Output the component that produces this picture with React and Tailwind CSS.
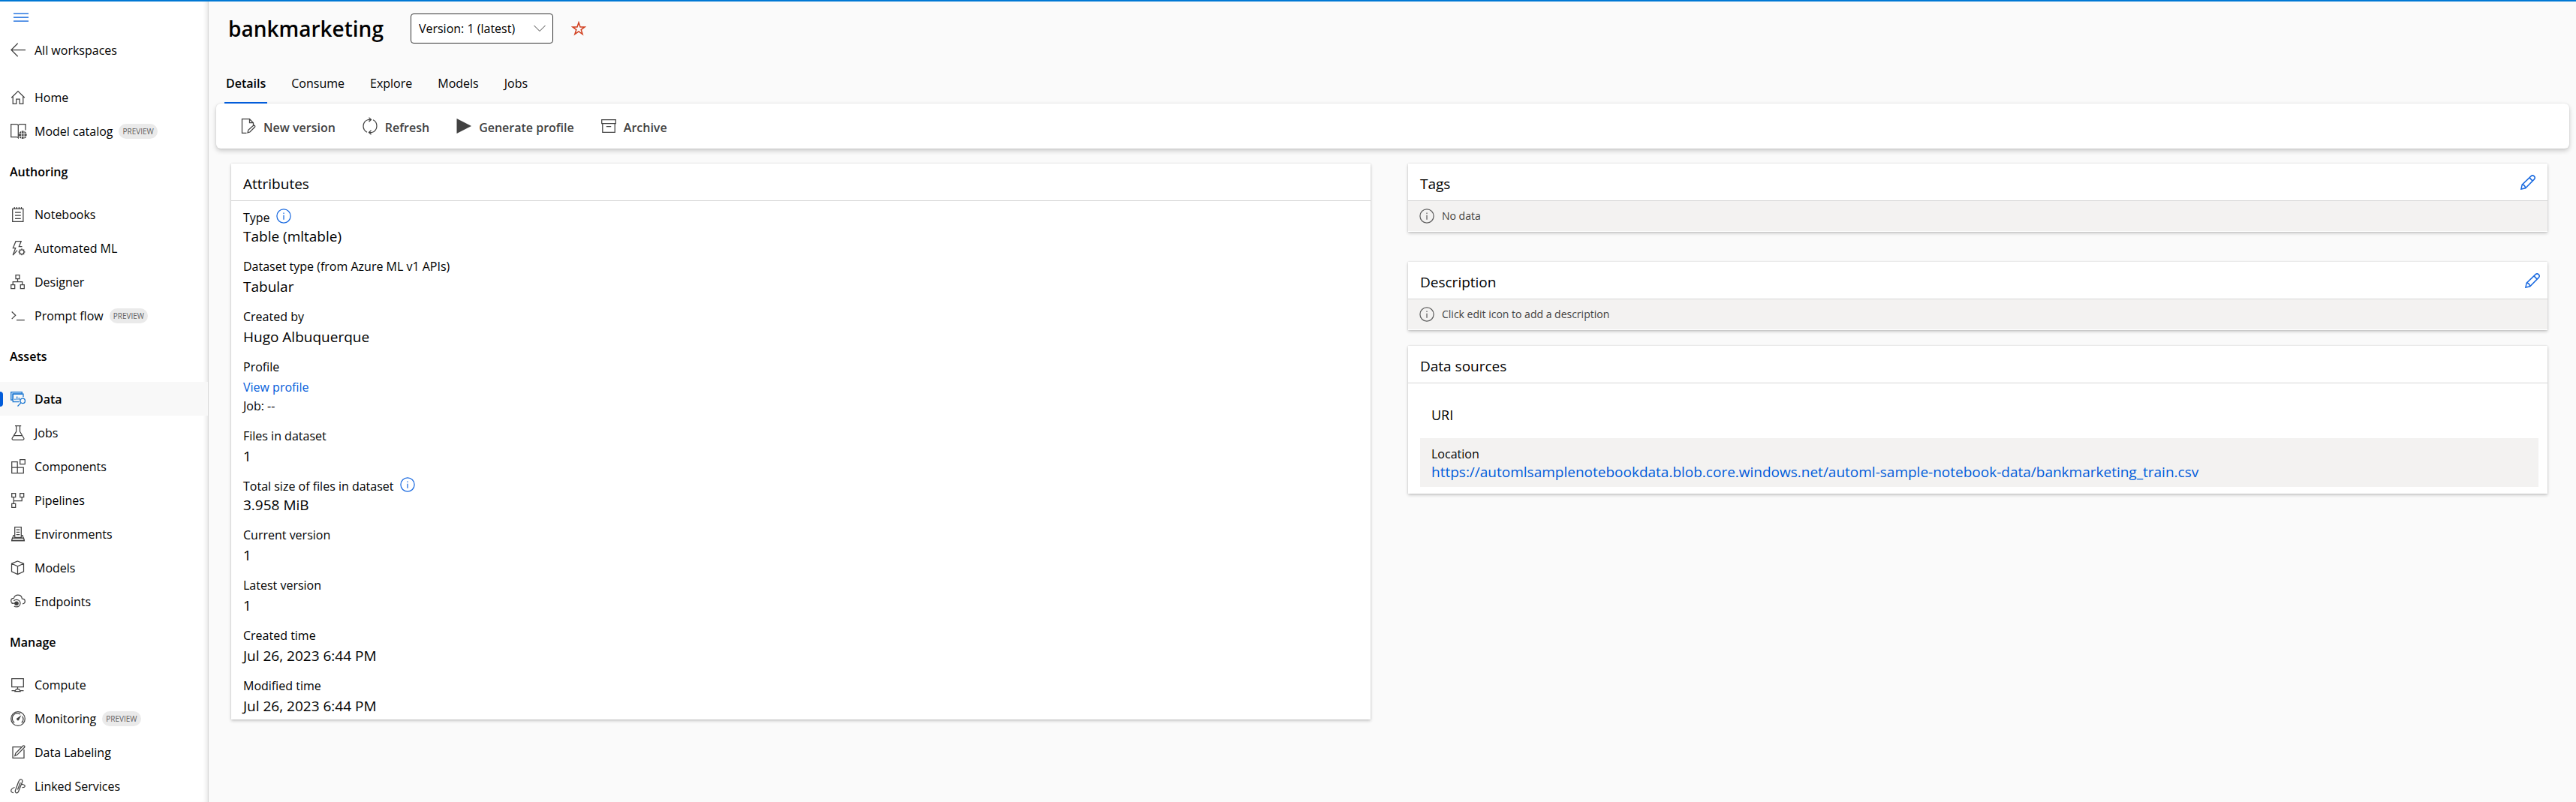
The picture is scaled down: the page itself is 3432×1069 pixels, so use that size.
import { useState } from "react";

function Svg({ children, className = "size-5", ...rest }) {
  return (
    <svg
      viewBox="0 0 20 20"
      className={className}
      fill="none"
      stroke="currentColor"
      strokeWidth="1.25"
      aria-hidden="true"
      {...rest}
    >
      {children}
    </svg>
  );
}

const icons = {
  back: (
    <Svg>
      <path d="M20 9.5H1M9.7.8L1 9.5l8.7 8.7" />
    </Svg>
  ),
  home: (
    <Svg>
      <path d="M1.2 10.2L10 1.6l8.8 8.6M3.2 8.6v9.7h4.6v-6.2h4.4v6.2h4.6V8.6" />
    </Svg>
  ),
  catalog: (
    <Svg className="h-5 w-[22px]" viewBox="0 0 22 20">
      <path d="M10.3 2.2C9.8 1.2 9 .7 8 .7H.7v16.8h7.2c1 0 1.9.3 2.4 1.2V2.2c.5-1 1.3-1.5 2.3-1.5H20v7.8" />
      <circle cx="16.3" cy="14.7" r="5.4" fill="currentColor" stroke="none" />
      <path d="M11 13.2h11M11 16.5h11M14.7 9v11.4M18 9v11.4" stroke="#fff" strokeWidth=".9" />
    </Svg>
  ),
  notebook: (
    <Svg>
      <path d="M2.7 2.3h14.2v17H2.7zM6 7h7.8M6 11.2h7.8M6 15.3h7.8M5.2 0v2.5M8.3 0v2.5M11.4 0v2.5M14.5 0v2.5" />
    </Svg>
  ),
  automl: (
    <Svg>
      <path d="M15.5 7.7h-4.2L14.2.7H7L3.4 9.5h3.3l-3.5 9.6 5.7-6.5" />
      <circle cx="15" cy="14.8" r="3" />
      <path d="M15 10.3v1.5M15 17.8v1.5M10.5 14.8H12M18 14.8h1.5M11.8 11.6l1.1 1.1M17.1 16.9l1.1 1.1M18.2 11.6l-1.1 1.1M12.9 16.9l-1.1 1.1" />
    </Svg>
  ),
  designer: (
    <Svg>
      <path d="M7 .7h5v5H7zM.7 13.7h5v5h-5zM13.3 13.7h5v5h-5zM9.5 5.7v3.8M3.2 13.7V9.5h12.6v4.2" />
    </Svg>
  ),
  prompt: (
    <Svg>
      <path d="M1.7 4.5l5 4.8-5 4.8M8 15.5h10.8" />
    </Svg>
  ),
  data: (
    <Svg>
      <path d="M.7.7h14.6v2.5H3.2v7.8H.7z" fill="#cfe4fa" />
      <path d="M17 7.3V3.2H3.2v10.5h8.5M6 11.2V9.5M8.7 11.2V6.5M11.3 11.2V8M9.5 19.5l4.2-4.4" />
      <circle cx="16.2" cy="12.3" r="3.2" />
    </Svg>
  ),
  jobs: (
    <Svg>
      <path d="M6 .7h8.2M7.7.7v7.5L2.3 17c-.6 1 0 2.3 1.2 2.3h13c1.2 0 1.8-1.3 1.2-2.3l-5.2-8.8V.7M4.7 13.7h10.8" />
    </Svg>
  ),
  components: (
    <Svg>
      <path d="M1.7 3.5h7.5v15H1.7zM1.7 11h15.6v7.5H9.2V11M12.7.7h6.6v6h-6.6z" />
    </Svg>
  ),
  pipelines: (
    <Svg>
      <path d="M1.7.7h5v5h-5zM12.7.7h5v5h-5zM1.7 14.3h5v5h-5zM4.2 5.7v8.6M4.2 10.7h11v-5" />
    </Svg>
  ),
  environments: (
    <Svg>
      <path d="M5.7 14.3V.7h8.6v13.6zM7.7 4.2h4.6M7.7 7.3h4.6M7.7 10.5h4.6" />
      <path d="M5.7 11.5H4l-2.3 7h16.6l-2.3-7h-1.7" />
      <path d="M2.5 15h15l.8 3.5H1.7z" fill="#d6d6d6" />
    </Svg>
  ),
  models: (
    <Svg>
      <path d="M9.5 1l8 3.2v10.6l-8 3.7-8-3.7V4.2zM1.5 4.2l8 3.6 8-3.6M9.5 7.8v10.7" />
    </Svg>
  ),
  endpoints: (
    <Svg>
      <path d="M2.8 12.2C1.3 11.5.7 10.2.7 8.9c0-2 1.5-3.5 3.7-3.5C5.2 2.8 7.3 1.2 9.8 1.2c3 0 5.2 2 5.6 4.8 2.3 0 3.9 1.5 3.9 3.5 0 1.9-1.2 3.2-3.3 3.3" />
      <path d="M4.3 8.7c1-1 2.3-1.4 3.7-1.4 3 0 5 2.2 5 4.7 0 2.8-2.2 4.9-5 4.9-1.2 0-2.3-.3-3.2-1" />
      <circle cx="8" cy="12.2" r="2.2" fill="currentColor" />
      <path d="M1.5 12.2H8" />
    </Svg>
  ),
  compute: (
    <Svg>
      <path d="M1.7 1.5h15.6v11H1.7zM9.5 12.5v3M1.5 17.5h5M12.5 17.5h5M6 18.5l1.5-3h4l1.5 3z" />
    </Svg>
  ),
  monitoring: (
    <Svg>
      <circle cx="10" cy="10" r="9.3" />
      <path d="M5.2 15.2A6.7 6.7 0 1 1 13 4M15.8 6.8a6.7 6.7 0 0 1-1 8.4" />
      <path d="M14.5 5.2l-3.2 6.2a1.7 1.7 0 1 1-2.5-2.2z" fill="currentColor" stroke="none" />
    </Svg>
  ),
  labeling: (
    <Svg>
      <path d="M14.5 2.7H3v14.6h15V6" />
      <path d="M5.8 14.5l1-3.5 9.7-9.7c.6-.6 1.5-.6 2 0 .6.6.6 1.4 0 2L8.9 13.1z" />
    </Svg>
  ),
  linked: (
    <Svg>
      <path d="M5.5 11.5C2.5 12.5.7 14 .7 16c0 1.5 1.3 2.7 3.3 2.5M14.5 7.2l3 .8c1.5.5 2 1.5 1.5 2.5-.5.9-1.5 1.2-3.5 1.2" />
      <path d="M10.5 4.5L6.5 15.5c-.5 1.5 0 3 1.2 3.3 1.2.4 2.3-.3 2.9-1.8l5-12.5c.6-1.6.1-3-1-3.5-1.2-.5-2.5.2-3.1 1.5z" />
      <path d="M9.5 14.5l3.7-9.5" />
    </Svg>
  ),
  newVersion: (
    <Svg>
      <path d="M7.5 19.3H1.5V.7h10l5 5V9M11.5.7v5h5" />
      <path d="M9 18.8l.8-3.5 6.5-5.8c.6-.6 1.5-.5 2 0 .6.6.5 1.4 0 2L11.9 18z" />
    </Svg>
  ),
  refresh: (
    <Svg className="h-6 w-5" viewBox="0 0 20 24">
      <path d="M6 20.2C3 18.7 1 15.7 1 12s2.5-7.5 6.5-8.5h3.8M8.500.8l3 2.700-3 2.800M14 3.800c3 1.500 5 4.500 5 8.200s-2.500 7.500-6.500 8.500H8.700M11.500 17.700l-3 2.800 3 2.700" />
    </Svg>
  ),
  play: (
    <Svg>
      <path d="M.5 0v20L20 10z" fill="currentColor" stroke="none" />
    </Svg>
  ),
  archive: (
    <Svg>
      <path d="M.7 1.7h18.6v4.8H.7zM1.8 6.5v11.8h16.4V6.5M6.8 10.7h6.4" />
    </Svg>
  ),
  edit: (
    <Svg strokeWidth="1.5">
      <path d="M.9 19.1l1.3-6L14 1.9a2.9 2.9 0 0 1 4.2 4.2L6.7 17.7zM12 3.9l4.2 4.2M2.2 13.1c2.3.3 4.1 2 4.5 4.6" />
    </Svg>
  ),
  info: (
    <Svg>
      <circle cx="10" cy="10" r="9.1" />
      <path d="M10 8.7v6M10 5.5v1.6" />
    </Svg>
  ),
  star: (
    <Svg strokeWidth="1.5">
      <path d="M10 2l2 5.9h6.2l-5 3.7 1.9 6-5.1-3.7-5.1 3.7 1.9-6-5-3.7H8z" />
    </Svg>
  ),
};

const groups = [
  {
    items: [
      { icon: "home", label: "Home" },
      { icon: "catalog", label: "Model catalog", preview: true },
    ],
  },
  {
    title: "Authoring",
    items: [
      { icon: "notebook", label: "Notebooks" },
      { icon: "automl", label: "Automated ML" },
      { icon: "designer", label: "Designer" },
      { icon: "prompt", label: "Prompt flow", preview: true },
    ],
  },
  {
    title: "Assets",
    items: [
      { icon: "data", label: "Data", active: true },
      { icon: "jobs", label: "Jobs" },
      { icon: "components", label: "Components" },
      { icon: "pipelines", label: "Pipelines" },
      { icon: "environments", label: "Environments" },
      { icon: "models", label: "Models" },
      { icon: "endpoints", label: "Endpoints" },
    ],
  },
  {
    title: "Manage",
    items: [
      { icon: "compute", label: "Compute" },
      { icon: "monitoring", label: "Monitoring", preview: true },
      { icon: "labeling", label: "Data Labeling" },
      { icon: "linked", label: "Linked Services" },
    ],
  },
];

function NavItem({ icon, label, preview, active }) {
  return (
    <a
      href="#"
      aria-current={active ? "page" : undefined}
      className={
        active
          ? "relative flex h-[45px] items-center bg-[#f8f8f8] pl-3.5 font-semibold"
          : "relative flex h-[45px] items-center pl-3.5"
      }
    >
      {active && <span className="absolute left-0 h-5 w-1 rounded-r-sm bg-[#015cda]" />}
      <span className={active ? "w-8 shrink-0 text-[#1473d0]" : "w-8 shrink-0 text-[#424242]"}>
        {icons[icon]}
      </span>
      <span>{label}</span>
      {preview && (
        <span className="ml-2 flex h-5 items-center rounded-full bg-[#eaeaea] px-[5px] text-[10px] font-medium text-[#616161]">
          PREVIEW
        </span>
      )}
    </a>
  );
}

function Sidebar() {
  return (
    <nav className="z-10 w-[278px] shrink-0 overflow-hidden border-r border-[#d9d9d9] bg-white shadow-[inset_-6px_0_6px_-5px_rgba(0,0,0,0.14)]">
      <button type="button" aria-label="Toggle navigation" className="flex h-[42px] items-center pl-[18px] text-[#015cda]">
        <svg viewBox="0 0 20 12" className="h-3 w-5" stroke="currentColor" strokeWidth="1.25" aria-hidden="true">
          <path d="M0 1h20M0 6h20M0 11h20" />
        </svg>
      </button>
      <NavItem icon="back" label="All workspaces" />
      <div className="h-[18px]" />
      {groups.map((g) => (
        <section key={g.title ?? "top"}>
          {g.title && <h2 className="flex h-[66px] items-center pb-0.5 pl-[13px] font-semibold">{g.title}</h2>}
          {g.items.map((item) => (
            <NavItem key={item.label} {...item} />
          ))}
        </section>
      ))}
    </nav>
  );
}

function Card({ title, action, children, className = "" }) {
  return (
    <section className={`bg-white shadow-[0_2px_4px_rgba(0,0,0,0.2),0_0_2px_rgba(0,0,0,0.14)] ${className}`}>
      <header className="flex h-[50px] items-center justify-between border-b border-[#d6d6d6] px-4">
        <h2 className="pt-1 text-[19px] leading-6">{title}</h2>
        {action}
      </header>
      {children}
    </section>
  );
}

function EditButton({ label, className = "" }) {
  return (
    <button type="button" aria-label={label} className={`text-[#1a6ae0] ${className}`}>
      {icons.edit}
    </button>
  );
}

function EmptyNote({ children }) {
  return (
    <p className="flex h-10 items-center gap-2.5 bg-[#f3f2f1] px-[15px] text-[14px] text-[#424242]">
      <span className="text-[#616161]">{icons.info}</span>
      {children}
    </p>
  );
}

const attributes = [
  { label: "Type", value: "Table (mltable)", info: true },
  { label: "Dataset type (from Azure ML v1 APIs)", value: "Tabular" },
  { label: "Created by", value: "Hugo Albuquerque" },
  { label: "Profile", profile: true },
  { label: "Files in dataset", value: "1" },
  { label: "Total size of files in dataset", value: "3.958 MiB", info: true },
  { label: "Current version", value: "1" },
  { label: "Latest version", value: "1" },
  { label: "Created time", value: "Jul 26, 2023 6:44 PM" },
  { label: "Modified time", value: "Jul 26, 2023 6:44 PM" },
];

function Attribute({ label, value, info, profile }) {
  return (
    <div>
      <dt className={info ? "flex h-[25px] items-center gap-2 pb-0.5" : "flex h-[27px] items-center pb-1"}>
        {label}
        {info && (
          <button type="button" aria-label={`About ${label}`} className="mb-1 text-[#1a6ae0]">
            {icons.info}
          </button>
        )}
      </dt>
      {profile ? (
        <dd className="leading-[25px]">
          <a href="#" className="block text-[#015cda]">
            View profile
          </a>
          Job: --
        </dd>
      ) : (
        <dd className="text-[19px] leading-[25px]">{value}</dd>
      )}
    </div>
  );
}

const tabs = ["Details", "Consume", "Explore", "Models", "Jobs"];

const commands = [
  { icon: "newVersion", label: "New version" },
  { icon: "refresh", label: "Refresh" },
  { icon: "play", label: "Generate profile" },
  { icon: "archive", label: "Archive" },
];

export default function App() {
  const [tab, setTab] = useState("Details");
  return (
    <div className="flex h-screen overflow-hidden border-t-2 border-[#0078d4] bg-[#fafafa] font-['Open_Sans','Noto_Sans',sans-serif] text-[16px] leading-6 text-black">
      <Sidebar />
      <main className="min-w-0 flex-1 overflow-auto">
        <div className="flex items-center pt-4 pl-[26px]">
          <h1 className="text-[28px] leading-9 font-semibold">bankmarketing</h1>
          <div className="relative ml-9 w-[190px]">
            <select
              aria-label="Version"
              className="h-10 w-full appearance-none rounded-sm border border-[#333] bg-white pl-2.5 text-[16px]"
            >
              <option>Version: 1 (latest)</option>
            </select>
            <svg
              viewBox="0 0 16 10"
              className="pointer-events-none absolute top-[15px] right-2.5 h-2.5 w-4"
              fill="none"
              stroke="#424242"
              aria-hidden="true"
            >
              <path d="M.5 1L8 8.5 15.5 1" />
            </svg>
          </div>
          <button type="button" aria-label="Add to favorites" className="ml-6 text-[#d13f1f]">
            {icons.star}
          </button>
        </div>

        <div role="tablist" className="mt-7 flex gap-[30px] pl-[21px]">
          {tabs.map((t) => (
            <button
              key={t}
              type="button"
              role="tab"
              aria-selected={t === tab}
              onClick={() => setTab(t)}
              className={
                t === tab
                  ? "h-[52px] border-b-2 border-[#015cda] px-0.5 font-semibold"
                  : "h-[52px] border-b-2 border-transparent px-0.5"
              }
            >
              {t}
            </button>
          ))}
        </div>

        <div className="mr-[9px] ml-2.5 flex h-[60px] items-center gap-9 rounded-md bg-white pl-[33px] font-semibold text-[#424242] shadow-[0_3px_6px_rgba(0,0,0,0.2),0_0_2px_rgba(0,0,0,0.12)]">
          {commands.map((c) => (
            <button key={c.label} type="button" className="flex items-center gap-2.5">
              {icons[c.icon]}
              <span className="pt-1">{c.label}</span>
            </button>
          ))}
        </div>

        <div className="mt-5 mr-[38px] ml-[30px] grid grid-cols-2 items-start gap-[50px] pb-5">
          <Card title="Attributes">
            <dl className="flex flex-col gap-[15px] px-4 pt-2.5 pb-[5px]">
              {attributes.map((a) => (
                <Attribute key={a.label} {...a} />
              ))}
            </dl>
          </Card>
          <div>
            <Card title="Tags" action={<EditButton label="Edit tags" />} className="pb-px">
              <EmptyNote>No data</EmptyNote>
            </Card>
            <Card
              title="Description"
              action={<EditButton label="Edit description" className="-mr-1.5" />}
              className="mt-10 pb-px"
            >
              <EmptyNote>Click edit icon to add a description</EmptyNote>
            </Card>
            <Card title="Data sources" className="mt-[21px] pb-[9px]">
              <h3 className="mt-[30px] mb-[19px] pl-[31px] text-[18px]">URI</h3>
              <div className="mr-3 ml-4 bg-[#f3f2f1] px-[15px] pt-[9px] pb-2">
                <div>Location</div>
                <a href="#" className="block text-[19px] text-[#015cda]">
                  https://automlsamplenotebookdata.blob.core.windows.net/automl-sample-notebook-data/bankmarketing_train.csv
                </a>
              </div>
            </Card>
          </div>
        </div>
      </main>
    </div>
  );
}
